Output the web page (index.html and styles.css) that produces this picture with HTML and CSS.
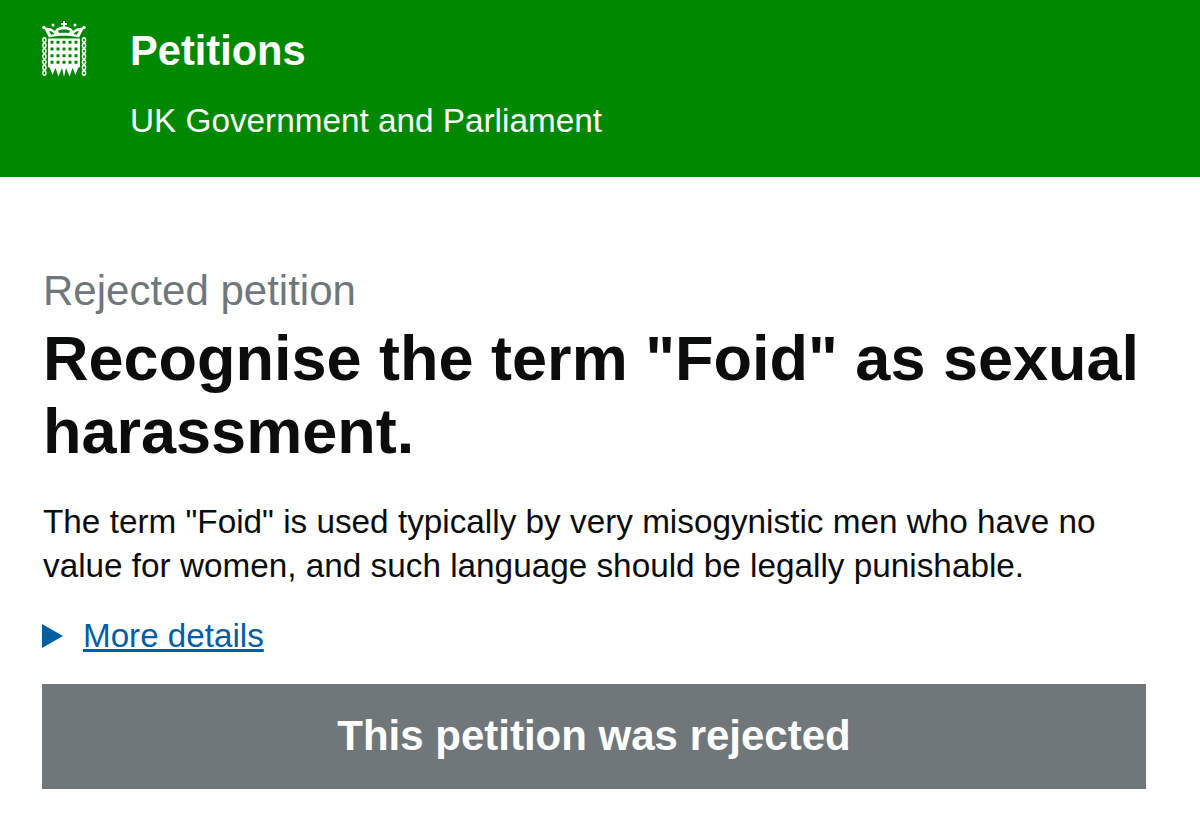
FILE: index.html
```html
<!DOCTYPE html>
<html lang="en">
<head>
<meta charset="utf-8">
<title>Petitions</title>
<link rel="stylesheet" href="styles.css">
</head>
<body>
<header class="site-header">
  <svg class="crest" viewBox="0 0 46 58" width="46" height="58" aria-hidden="true">
    <g fill="#fff">
      <path d="M21 1h2v2h2v2h-2v3h-2V5h-2V3h2z"/>
      <circle cx="2" cy="7.500" r="1.700"/><circle cx="42" cy="7.500" r="1.700"/>
      <circle cx="11" cy="5" r="1.500"/><circle cx="33" cy="5" r="1.500"/>
      <path fill-rule="evenodd" d="M2 8c4-1 8 0 11 3 1-3 5-4.500 9-4.500s8 1.500 9 4.500c3-3 7-4 11-3l-5 9.500c-9-2.500-21-2.500-30 0z M7 11c2 0 4 1 5.500 3l-3.500.8z M37 11c-2 0-4 1-5.500 3l3.500.8z M16 10.500c3-1.500 9-1.500 12 0l-1 2.500c-3-.5-7-.5-10 0z"/>
      <path fill-rule="evenodd" d="M6 18.500h32V47l-2 1-2.500 7-3-7-3 8.500-3.500-8.500-2 9-2-9-3.500 8.500-3-8.500-3 7-2.500-7-2-1z M8.500 20.800h3v3h-3z M14.500 20.800h3v3h-3z M20.500 20.800h3v3h-3z M26.500 20.800h3v3h-3z M32.500 20.800h3v3h-3z M8.500 27.500h3v3h-3z M14.500 27.500h3v3h-3z M20.500 27.500h3v3h-3z M26.500 27.500h3v3h-3z M32.500 27.500h3v3h-3z M8.500 34.200h3v3h-3z M14.500 34.200h3v3h-3z M20.500 34.200h3v3h-3z M26.500 34.200h3v3h-3z M32.500 34.200h3v3h-3z M8.500 40.800h3v3h-3z M14.500 40.800h3v3h-3z M20.500 40.800h3v3h-3z M26.500 40.800h3v3h-3z M32.500 40.800h3v3h-3z"/>
    </g>
    <g fill="none" stroke="#fff" stroke-width="1.400">
      <ellipse cx="2.400" cy="20" rx="1.600" ry="2.300"/><ellipse cx="2.400" cy="25.500" rx="1.600" ry="2.300"/><ellipse cx="2.400" cy="31" rx="1.600" ry="2.300"/><ellipse cx="2.400" cy="36.500" rx="1.600" ry="2.300"/><ellipse cx="2.400" cy="42" rx="1.600" ry="2.300"/><ellipse cx="2.400" cy="47.500" rx="1.600" ry="2.300"/><ellipse cx="2.400" cy="53" rx="1.600" ry="2.300"/>
      <ellipse cx="42" cy="20" rx="1.600" ry="2.300"/><ellipse cx="42" cy="25.500" rx="1.600" ry="2.300"/><ellipse cx="42" cy="31" rx="1.600" ry="2.300"/><ellipse cx="42" cy="36.500" rx="1.600" ry="2.300"/><ellipse cx="42" cy="42" rx="1.600" ry="2.300"/><ellipse cx="42" cy="47.500" rx="1.600" ry="2.300"/><ellipse cx="42" cy="53" rx="1.600" ry="2.300"/>
    </g>
  </svg>
  <div class="brand">
    <div class="brand-title">Petitions</div>
    <div class="brand-sub">UK Government and Parliament</div>
  </div>
</header>
<main class="content">
  <p class="caption">Rejected petition</p>
  <h1 class="title">Recognise the term "Foid" as sexual harassment.</h1>
  <p class="summary">The term "Foid" is used typically by very misogynistic men who have no value for women, and such language should be legally punishable.</p>
  <div class="details">
    <span class="arrow"></span>
    <a class="details-link" href="#">More details</a>
  </div>
  <div class="banner">This petition was rejected</div>
</main>
</body>
</html>
```

FILE: styles.css
```css
* { box-sizing: border-box; }
html, body { margin: 0; padding: 0; }
body {
  background: #fff;
  color: #0b0c0c;
  font-family: "Liberation Sans", Arial, sans-serif;
  height: 831px;
  overflow: hidden;
}
.site-header {
  background: #008800;
  color: #fff;
  height: 177px;
  display: flex;
  padding: 20px 0 0 42px;
  gap: 42px;
}
.crest { flex: none; }
.brand-title {
  font-size: 41.6px;
  font-weight: 700;
  line-height: 44px;
  margin-top: 9px;
}
.brand-sub {
  font-size: 33.3px;
  line-height: 40px;
  margin-top: 28px;
}
.content { padding: 92px 54px 0 42px; }
.caption {
  margin: 0 0 0 1px;
  font-size: 42px;
  line-height: 44px;
  color: #6f777b;
}
.title {
  margin: 9px 0 0 1px;
  font-size: 63px;
  line-height: 73px;
  font-weight: 700;
}
.summary {
  margin: 32px 0 0 1px;
  font-size: 33.3px;
  line-height: 44px;
}
.details {
  display: flex;
  align-items: center;
  gap: 20px;
  margin-top: 29px;
  height: 38px;
}
.arrow {
  width: 0;
  height: 0;
  border-left: 21px solid #005ea5;
  border-top: 12px solid transparent;
  border-bottom: 12px solid transparent;
}
.details-link {
  font-size: 33.2px;
  color: #005ea5;
}
.banner {
  margin-top: 29px;
  height: 105px;
  padding-bottom: 2px;
  background: #6f777b;
  color: #fff;
  font-size: 42px;
  font-weight: 700;
  display: flex;
  align-items: center;
  justify-content: center;
}
```
